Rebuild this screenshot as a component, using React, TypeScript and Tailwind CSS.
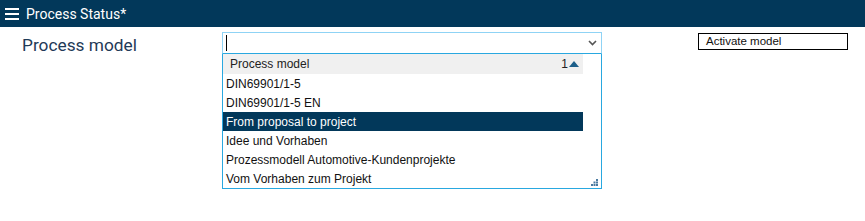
import React from "react";

const items = [
  "DIN69901/1-5",
  "DIN69901/1-5 EN",
  "From proposal to project",
  "Idee und Vorhaben",
  "Prozessmodell Automotive-Kundenprojekte",
  "Vom Vorhaben zum Projekt",
];

export default function App() {
  return (
    <div className="w-[865px] h-[221px] bg-white overflow-hidden" style={{ fontFamily: "Roboto, 'Liberation Sans', sans-serif" }}>
      <div className="h-[27px] bg-[#02385a] flex items-center pl-[5px] gap-[7px]">
        <svg width="14" height="12" viewBox="0 0 14 12" className="mt-[1px]">
          <rect x="0" y="0" width="14" height="2" fill="#fff" />
          <rect x="0" y="5" width="14" height="2" fill="#fff" />
          <rect x="0" y="10" width="14" height="2" fill="#fff" />
        </svg>
        <span className="text-white text-[14px] leading-none">Process Status*</span>
      </div>
      <div className="flex items-start pt-[5px]">
        <div className="w-[222px] pl-[22px] text-[17.3px] leading-[22px] text-[#1f3a57] pt-[2px]">Process model</div>
        <div className="w-[380px] flex flex-col">
          <div className="h-[22px] border border-[#8fd3f5] border-b-[#29a8e0] flex items-center justify-between pl-[3px] pr-[4px]">
            <div className="w-[1px] h-[16px] bg-black" />
            <svg width="9" height="6" viewBox="0 0 9 6">
              <path d="M1 1 L4.5 4.5 L8 1" stroke="#555" strokeWidth="1.6" fill="none" />
            </svg>
          </div>
          <div className="relative h-[135px] border border-[#29a8e0] border-t-0 pr-[18px]" style={{ fontFamily: "'Liberation Sans', Arial, sans-serif" }}>
            <div className="h-[20px] bg-[#f0f0f0] flex items-center justify-between pl-[7px] pr-[4px] text-[12px] text-[#222]">
              <span>Process model</span>
              <span className="flex items-center gap-[1px]">
                <span>1</span>
                <svg width="10" height="6" viewBox="0 0 10 6">
                  <path d="M0 6 L5 0 L10 6 Z" fill="#1d5f8a" />
                </svg>
              </span>
            </div>
            {items.map((t, i) => (
              <div
                key={t}
                className={
                  i === 2
                    ? "h-[19px] flex items-center pl-[3px] text-[12px] bg-[#02385a] text-white"
                    : "h-[19px] flex items-center pl-[3px] text-[12px] text-[#111]"
                }
              >
                {t}
              </div>
            ))}
            <svg className="absolute right-[3px] bottom-[2px]" width="7" height="7" viewBox="0 0 7 7">
              <rect x="5" y="0" width="2" height="2" fill="#4a7aa0" />
              <rect x="2.5" y="2.5" width="2" height="2" fill="#4a7aa0" />
              <rect x="5" y="2.5" width="2" height="2" fill="#4a7aa0" />
              <rect x="0" y="5" width="2" height="2" fill="#4a7aa0" />
              <rect x="2.5" y="5" width="2" height="2" fill="#4a7aa0" />
              <rect x="5" y="5" width="2" height="2" fill="#4a7aa0" />
            </svg>
          </div>
        </div>
        <div className="ml-[96px] mt-[1px] w-[150px] h-[17px] border border-black flex items-center pl-[7px] text-[11.5px] text-[#111]" style={{ fontFamily: "'Liberation Sans', Arial, sans-serif" }}>
          Activate model
        </div>
      </div>
    </div>
  );
}
